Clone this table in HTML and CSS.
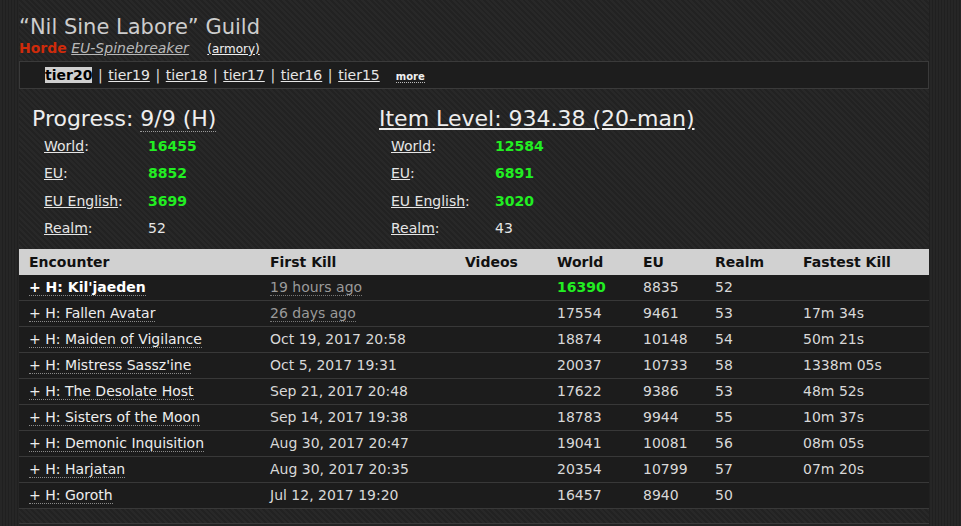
FILE: index.html
```html
<!DOCTYPE html>
<html>
<head>
<meta charset="utf-8">
<link rel="stylesheet" href="styles.css">
</head>
<body>
<div class="page">
  <div class="main">
    <h1 class="title">“Nil Sine Labore” Guild</h1>
    <div class="subline">
      <span class="faction">Horde</span> <a class="realm">EU-Spinebreaker</a> <a class="armory">(armory)</a>
    </div>
    <div class="tabs">
      <span class="tab active">tier20</span><span class="sep">|</span><a class="tab">tier19</a><span class="sep">|</span><a class="tab">tier18</a><span class="sep">|</span><a class="tab">tier17</a><span class="sep">|</span><a class="tab">tier16</a><span class="sep">|</span><a class="tab">tier15</a><a class="more">more</a>
    </div>
    <div class="stats">
      <div class="col">
        <div class="heading">Progress: <span class="dotted">9/9 (H)</span></div>
        <div class="row"><span class="label"><a>World</a>:</span><span class="val hi">16455</span></div>
        <div class="row"><span class="label"><a>EU</a>:</span><span class="val hi">8852</span></div>
        <div class="row"><span class="label"><a>EU English</a>:</span><span class="val hi">3699</span></div>
        <div class="row"><span class="label"><a>Realm</a>:</span><span class="val">52</span></div>
      </div>
      <div class="col">
        <div class="heading"><a class="ul">Item Level: 934.38 (20-man)</a></div>
        <div class="row"><span class="label"><a>World</a>:</span><span class="val hi">12584</span></div>
        <div class="row"><span class="label"><a>EU</a>:</span><span class="val hi">6891</span></div>
        <div class="row"><span class="label"><a>EU English</a>:</span><span class="val hi">3020</span></div>
        <div class="row"><span class="label"><a>Realm</a>:</span><span class="val">43</span></div>
      </div>
    </div>
    <table class="enc">
      <colgroup>
        <col class="c1"><col class="c2"><col class="c3"><col class="c4"><col class="c5"><col class="c6"><col class="c7">
      </colgroup>
      <thead>
        <tr><th>Encounter</th><th>First Kill</th><th>Videos</th><th>World</th><th>EU</th><th>Realm</th><th>Fastest Kill</th></tr>
      </thead>
      <tbody>
        <tr class="latest"><td><span class="name">+ H: Kil'jaeden</span></td><td><span class="ago">19 hours ago</span></td><td></td><td class="hi">16390</td><td>8835</td><td>52</td><td></td></tr>
        <tr><td><span class="name">+ H: Fallen Avatar</span></td><td><span class="ago">26 days ago</span></td><td></td><td>17554</td><td>9461</td><td>53</td><td>17m 34s</td></tr>
        <tr><td><span class="name">+ H: Maiden of Vigilance</span></td><td>Oct 19, 2017 20:58</td><td></td><td>18874</td><td>10148</td><td>54</td><td>50m 21s</td></tr>
        <tr><td><span class="name">+ H: Mistress Sassz'ine</span></td><td>Oct 5, 2017 19:31</td><td></td><td>20037</td><td>10733</td><td>58</td><td>1338m 05s</td></tr>
        <tr><td><span class="name">+ H: The Desolate Host</span></td><td>Sep 21, 2017 20:48</td><td></td><td>17622</td><td>9386</td><td>53</td><td>48m 52s</td></tr>
        <tr><td><span class="name">+ H: Sisters of the Moon</span></td><td>Sep 14, 2017 19:38</td><td></td><td>18783</td><td>9944</td><td>55</td><td>10m 37s</td></tr>
        <tr><td><span class="name">+ H: Demonic Inquisition</span></td><td>Aug 30, 2017 20:47</td><td></td><td>19041</td><td>10081</td><td>56</td><td>08m 05s</td></tr>
        <tr><td><span class="name">+ H: Harjatan</span></td><td>Aug 30, 2017 20:35</td><td></td><td>20354</td><td>10799</td><td>57</td><td>07m 20s</td></tr>
        <tr><td><span class="name">+ H: Goroth</span></td><td>Jul 12, 2017 19:20</td><td></td><td>16457</td><td>8940</td><td>50</td><td></td></tr>
      </tbody>
    </table>
    <div class="next"></div>
  </div>
</div>
</body>
</html>
```
FILE: styles.css
```css
html, body {
  margin: 0;
  padding: 0;
}
body {
  width: 961px;
  height: 526px;
  overflow: hidden;
  font-family: "DejaVu Sans", Verdana, sans-serif;
  color: #ddd;
  background-color: #242424;
  background-image: repeating-linear-gradient(90deg, #262626 0 2px, #202020 2px 3px);
}
.page {
  padding-left: 19px;
}
.main {
  width: 910px;
  background-color: #252525;
  background-image: repeating-linear-gradient(45deg, #282828 0 2px, #222 2px 4px);
  padding-top: 15px;
  min-height: 520px;
}
.title {
  margin: 0;
  font-size: 21px;
  line-height: 24px;
  font-weight: normal;
  color: #cdcdcd;
}
.subline {
  font-size: 14px;
  line-height: 18px;
  height: 18px;
}
.faction {
  color: #cf2b0b;
  font-weight: bold;
}
.realm {
  color: #b8b8b8;
  font-style: italic;
  text-decoration: underline;
}
.armory {
  margin-left: 14px;
  font-size: 12px;
  color: #f0f0f0;
  text-decoration: underline;
}
.tabs {
  margin-top: 4px;
  height: 26px;
  line-height: 26px;
  border: 1px solid #3a3a3a;
  background: #1d1d1d;
  padding-left: 25px;
  font-size: 14px;
  color: #ddd;
}
.sep {
  margin: 0 5.6px;
}
.tab {
  color: #e6e6e6;
  text-decoration: underline;
}
.tab.active {
  background: #cfcfcf;
  color: #000;
  font-weight: bold;
  text-decoration: none;
}
.more {
  margin-left: 16px;
  font-size: 10px;
  font-weight: bold;
  color: #f0f0f0;
  border-bottom: 1px dotted #bbb;
}
.stats {
  display: grid;
  grid-template-columns: 347px 1fr;
  padding-left: 13px;
  margin-top: 17px;
}
.heading {
  font-size: 22px;
  line-height: 25px;
  color: #eee;
  margin-bottom: 2px;
}
.dotted {
  border-bottom: 1px dotted #999;
}
.ul {
  text-decoration: underline;
}
.row {
  display: flex;
  padding-left: 12px;
  font-size: 14px;
  line-height: 27.3px;
}
.label {
  width: 104px;
  color: #e6e6e6;
}
.label a {
  text-decoration: underline;
}
.val {
  color: #e6e6e6;
}
.hi {
  color: #22ee22;
  font-weight: bold;
}
.enc {
  margin-top: 7px;
  width: 910px;
  border-collapse: collapse;
  table-layout: fixed;
  font-size: 14px;
}
.c1 { width: 241px; }
.c2 { width: 195px; }
.c3 { width: 92px; }
.c4 { width: 86px; }
.c5 { width: 72px; }
.c6 { width: 88px; }
.enc th {
  text-align: left;
  padding: 0 0 0 10px;
  height: 26px;
  line-height: 26px;
  background: #d1d1d1;
  color: #111;
  font-weight: bold;
}
.enc td {
  padding: 0 0 0 10px;
  line-height: 25px;
  height: 25px;
  background: #1c1c1c;
  border-bottom: 1px solid #383838;
  color: #d8d8d8;
  white-space: nowrap;
}
.name {
  color: #eee;
  border-bottom: 1px dotted #8a8a8a;
}
.latest .name {
  font-weight: bold;
  color: #fff;
}
.ago {
  color: #9a9a9a;
  border-bottom: 1px dotted #777;
}
.enc td.hi {
  color: #22ee22;
  font-weight: bold;
}
.next {
  margin-top: 14px;
  border-top: 1px solid #3a3a3a;
  height: 10px;
  background: #222;
}
```
